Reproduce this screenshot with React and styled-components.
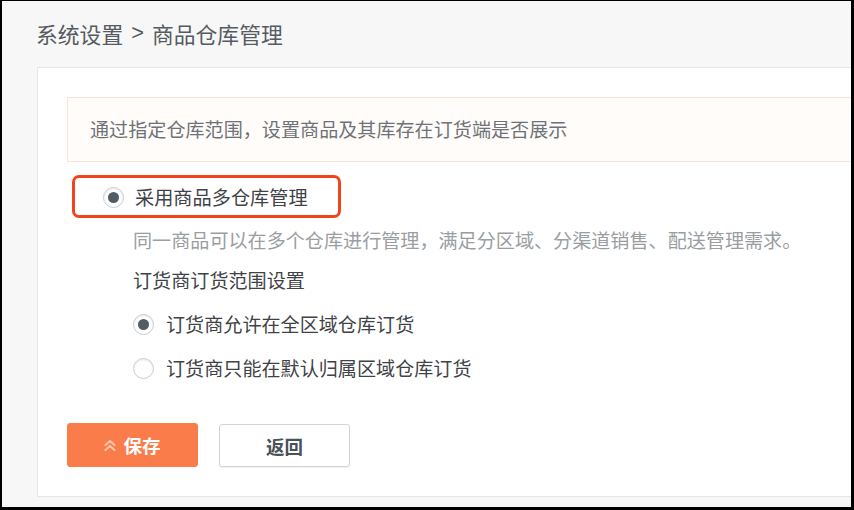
import React from "react";
import styled, { createGlobalStyle } from "styled-components";

const Global = createGlobalStyle`
  html, body { margin: 0; padding: 0; background: #000; }
  body { font-family: "Noto Sans CJK SC", "Noto Sans", sans-serif; }
  * { box-sizing: border-box; }
`;

const Frame = styled.div`
  margin: 1px 0 0 2px;
  width: 849px;
  height: 506px;
  background: #f7f7f7;
  overflow: hidden;
  display: flex;
  flex-direction: column;
`;

const Header = styled.div`
  height: 66px;
  display: flex;
  align-items: center;
  padding-left: 34px;
  padding-bottom: 2px;
  font-size: 21.8px;
  color: #555b61;
  white-space: nowrap;
`;

const Sep = styled.span`
  margin: 0 8px;
  font-family: "Liberation Sans", sans-serif;
`;

const Card = styled.div`
  margin-left: 35px;
  width: 900px;
  height: 430px;
  background: #fff;
  border: 1px solid #e6e6e6;
  padding: 29px 0 0 29px;
  display: flex;
  flex-direction: column;
`;

const Notice = styled.div`
  height: 65px;
  background: #fffcfa;
  border: 1px solid #fbe3d7;
  display: flex;
  align-items: center;
  padding-left: 22px;
  padding-bottom: 1px;
  font-size: 19.1px;
  color: #6f7378;
  white-space: nowrap;
`;

const OptionRow = styled.div`
  position: relative;
  height: 40px;
  margin-top: 15px;
  display: flex;
  align-items: center;
  padding-left: 36px;
  gap: ${p => p.$gap || 12}px;
  font-size: 19.2px;
  color: #3f4347;
  white-space: nowrap;
`;

const Highlight = styled.div`
  position: absolute;
  left: 5px;
  top: -2px;
  width: 269px;
  height: 43px;
  border: 3px solid #f4431c;
  border-radius: 7px;
  pointer-events: none;
`;

const Radio = styled.span`
  width: 21px;
  height: 21px;
  flex: none;
  border-radius: 50%;
  border: 1px solid #c8cdd1;
  background: #fff;
  box-shadow: inset 0 1px 2px rgba(0,0,0,0.1);
  display: flex;
  align-items: center;
  justify-content: center;
  &::after {
    content: "";
    width: 11px;
    height: 11px;
    border-radius: 50%;
    background: ${p => (p.$checked ? "#525c64" : "transparent")};
  }
`;

const Sub = styled.div`
  margin-left: 66px;
  display: flex;
  flex-direction: column;
`;

const Line = styled.div`
  height: 24px;
  line-height: 24px;
  margin-top: ${p => p.$mt}px;
  font-size: 19.1px;
  color: ${p => p.$color};
  white-space: nowrap;
`;

const SubRadio = styled.label`
  height: 24px;
  margin-top: 20px;
  display: flex;
  align-items: center;
  gap: 12px;
  font-size: 19.1px;
  color: #3f4347;
  white-space: nowrap;
`;

const Actions = styled.div`
  margin-top: 43px;
  display: flex;
  gap: 21px;
  align-items: flex-start;
`;

const Button = styled.button`
  width: 131px;
  height: ${p => (p.$primary ? 44 : 43)}px;
  margin-top: ${p => (p.$primary ? 0 : 1)}px;
  border-radius: 3px;
  border: 1px solid ${p => (p.$primary ? "#f97c4a" : "#ccd5dc")};
  background: ${p => (p.$primary ? "#f97c4a" : "#fff")};
  color: ${p => (p.$primary ? "#fff" : "#4a5157")};
  font-family: "Noto Sans CJK SC", sans-serif;
  font-size: 18.5px;
  font-weight: 700;
  display: flex;
  align-items: center;
  justify-content: center;
  gap: 7px;
  padding: 0;
  box-shadow: ${p => (p.$primary ? "none" : "0 1px 1px rgba(0,0,0,0.06)")};
`;

const Chevrons = () => (
  <svg width="12" height="13" viewBox="0 0 12 13" fill="none" stroke="#fdc3a7" strokeWidth="2.2" strokeLinecap="round" strokeLinejoin="round">
    <path d="M1.5 6 L6 2 L10.5 6" />
    <path d="M1.5 11 L6 7 L10.5 11" />
  </svg>
);

export default function App() {
  return (
    <>
      <Global />
      <Frame>
        <Header>
          系统设置<Sep>&gt;</Sep>商品仓库管理
        </Header>
        <Card>
          <Notice>通过指定仓库范围，设置商品及其库存在订货端是否展示</Notice>
          <OptionRow $gap={11}>
            <Highlight />
            <Radio $checked />
            采用商品多仓库管理
          </OptionRow>
          <Sub>
            <Line $mt={11} $color="#9a9ea2">同一商品可以在多个仓库进行管理，满足分区域、分渠道销售、配送管理需求。</Line>
            <Line $mt={16} $color="#3f4347">订货商订货范围设置</Line>
            <SubRadio>
              <Radio $checked />
              订货商允许在全区域仓库订货
            </SubRadio>
            <SubRadio>
              <Radio />
              订货商只能在默认归属区域仓库订货
            </SubRadio>
          </Sub>
          <Actions>
            <Button $primary>
              <Chevrons />
              保存
            </Button>
            <Button>返回</Button>
          </Actions>
        </Card>
      </Frame>
    </>
  );
}
